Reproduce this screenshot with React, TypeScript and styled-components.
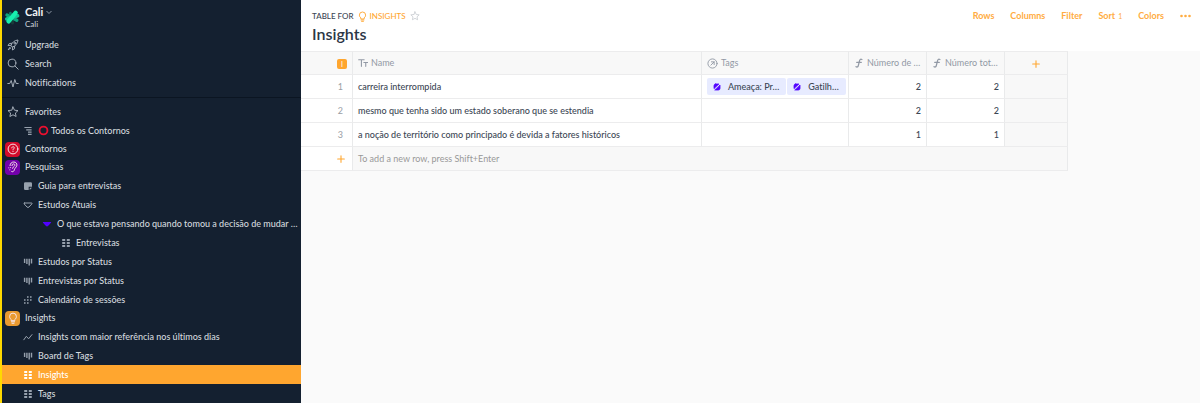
import React from "react";
import styled, { createGlobalStyle, css } from "styled-components";

const GlobalStyle = createGlobalStyle`
  *, *::before, *::after { box-sizing: border-box; }
  html, body { margin: 0; padding: 0; }
  body {
    font-family: Lato, "Noto Sans", sans-serif;
    font-size: 9px;
    line-height: 12px;
    font-variant-ligatures: none;
    color: #3b4654;
    background: #fafafa;
    overflow: hidden;
  }
  h1 { margin: 0; }
  a { color: inherit; text-decoration: none; }
  button { font: inherit; color: inherit; background: none; border: 0; padding: 0; cursor: pointer; }
`;

const Page = styled.div`
  display: flex;
  height: 100vh;
`;

/* Sidebar */

const Sidebar = styled.aside`
  flex: 0 0 301px;
  overflow: hidden;
  background: #142030;
  color: #d3d8de;
  border-left: 2px solid #ffd900;
`;

const SidebarTop = styled.div`
  padding: 3px 0 5px;
  border-bottom: 1px solid #0b1522;
`;

const Workspace = styled.button`
  display: flex;
  align-items: center;
  gap: 5px;
  height: 28px;
  margin: 0 0 4px 2px;
  text-align: left;
`;

const WorkspaceName = styled.span`
  display: flex;
  align-items: center;
  gap: 3px;
  font-size: 11px;
  line-height: 14px;
  font-weight: 700;
  color: #f1f3f5;
`;

const WorkspaceSub = styled.span`
  display: block;
  font-size: 8px;
  line-height: 10px;
`;

const NavList = styled.ul`
  list-style: none;
  margin: 0;
  padding: 0;
`;

const DocList = styled(NavList)`
  padding-top: 5px;
`;

const NavLink = styled.a<{ $depth: number; $active?: boolean; $root?: boolean }>`
  display: flex;
  align-items: center;
  height: ${(p) => (p.$root ? 18 : 19)}px;
  padding-left: ${(p) => (p.$depth === 0 ? 3 : 1 + p.$depth * 19)}px;
  gap: ${(p) => (p.$depth === 0 ? 5 : 4)}px;
  font-weight: 500;
  white-space: nowrap;
  ${(p) =>
    p.$active &&
    css`
      background: #ffa62f;
      color: #fff;
    `}
`;

const IconSlot = styled.span<{ $wide?: boolean }>`
  flex: none;
  display: flex;
  align-items: center;
  justify-content: center;
  width: ${(p) => (p.$wide ? 15 : 12)}px;
  color: #a3acb7;
`;

const Label = styled.span`
  display: flex;
  align-items: center;
  gap: 2px;
`;

const Badge = styled.span<{ $color: string }>`
  display: flex;
  align-items: center;
  justify-content: center;
  width: 15px;
  height: 15px;
  border-radius: 4px;
  background: ${(p) => p.$color};
  color: #f8e6e8;
`;

/* Main */

const Main = styled.main`
  flex: 1;
  min-width: 0;
  background: #fafafa;
`;

const Header = styled.header`
  display: flex;
  justify-content: space-between;
  height: 51px;
  padding: 10px 9px 0 11px;
  background: #fff;
`;

const Crumb = styled.div`
  display: flex;
  align-items: center;
  gap: 3px;
  height: 12px;
  font-size: 8px;
  font-weight: 500;
`;

const CrumbLink = styled.a`
  display: flex;
  align-items: center;
  gap: 2px;
  color: #ffa62f;
`;

const StarButton = styled.button`
  display: flex;
  margin-left: 1px;
  color: #c9ccd1;
`;

const Title = styled.h1`
  margin-top: 2px;
  font-size: 16px;
  line-height: 20px;
  font-weight: 600;
  color: #2b3646;
`;

const Toolbar = styled.div`
  display: flex;
  align-items: center;
  gap: 16px;
  height: 12px;
`;

const ToolButton = styled.button`
  display: flex;
  gap: 3px;
  line-height: 12px;
  font-weight: 700;
  color: #ffac41;
`;

const Count = styled.span`
  font-size: 7px;
  font-weight: 400;
`;

const Table = styled.table`
  width: 767px;
  table-layout: fixed;
  border-collapse: separate;
  border-spacing: 0;
`;

const Col = styled.col<{ $width?: number }>`
  width: ${(p) => (p.$width ? `${p.$width}px` : "auto")};
`;

const cell = css`
  height: 24px;
  padding: 0 5px;
  border-right: 1px solid #e9eaeb;
  border-bottom: 1px solid #ececed;
  overflow: hidden;
  white-space: nowrap;
`;

const Th = styled.th<{ $align?: string }>`
  ${cell}
  border-top: 1px solid #ececed;
  background: #f8f8f8;
  font-weight: 400;
  text-align: ${(p) => p.$align || "left"};
  color: #9299a5;
`;

const Td = styled.td<{ $align?: string; $muted?: boolean }>`
  ${cell}
  background: ${(p) => (p.$muted ? "#f8f8f8" : "#fff")};
  text-align: ${(p) => p.$align || "left"};
  font-weight: 500;
`;

const IndexTd = styled(Td)`
  padding-right: 9px;
  text-align: right;
  font-weight: 400;
  color: #9a9ea5;
`;

const AddRowTd = styled(IndexTd)`
  padding-right: 6px;
`;

const AddTd = styled(Td)`
  font-weight: 400;
  color: #999;
`;

const HeadLabel = styled.span`
  display: flex;
  align-items: center;
  gap: 3px;
`;

const TypeBadge = styled.span`
  display: inline-block;
  width: 10px;
  height: 10px;
  border-radius: 2px;
  background: #ffa62f;
  color: #fff;
  font-size: 7px;
  line-height: 10px;
  text-align: center;
  vertical-align: middle;
`;

const AddButton = styled.button`
  display: inline-flex;
  vertical-align: middle;
  color: #ffa62f;
`;

const Tags = styled.div`
  display: flex;
  gap: 1px;
`;

const Tag = styled.span`
  display: flex;
  align-items: center;
  gap: 7px;
  height: 17px;
  padding: 0 7px 0 6px;
  border-radius: 2px;
  background: #e7ebff;
  font-weight: 500;
`;

/* Icons */

const Svg = ({ size = 12, children }: { size?: number; children: React.ReactNode }) => (
  <svg width={size} height={size} viewBox="0 0 12 12" fill="none" stroke="currentColor" strokeWidth="1" strokeLinecap="round" strokeLinejoin="round" aria-hidden="true">
    {children}
  </svg>
);

const starPath = "M6 1 7.5 4.2 11 4.6 8.4 7 9.1 10.5 6 8.8 2.9 10.5 3.6 7 1 4.6 4.5 4.2Z";

const Rocket = () => (
  <Svg>
    <path d="M4 6.3C5 3.5 7.5 1.3 11 1 10.8 4.5 8.5 7 5.7 8Z" />
    <path d="M4.7 4.3 2.3 4.5 1 6.6 4 6.3M7.6 7.3 7.5 9.7 5.4 11 5.7 8M3 8.2 1.2 10.8 3.8 9" />
    <circle cx="7.9" cy="4.1" r="0.9" />
  </Svg>
);
const Search = () => (
  <Svg>
    <circle cx="5" cy="5" r="3.9" />
    <path d="M8 8 11.2 11.2" />
  </Svg>
);
const Pulse = () => (
  <Svg>
    <path d="M0.8 6.5H2.8L4.2 3.5 6 10 7.8 2.5 9.2 6.5H11.2" />
  </Svg>
);
const Star = ({ size = 12 }: { size?: number }) => (
  <Svg size={size}>
    <path d={starPath} />
  </Svg>
);
const Bulb = ({ size = 12 }: { size?: number }) => (
  <Svg size={size}>
    <path d="M4.2 8.3V7.5C3.2 6.8 2.6 5.8 2.6 4.5A3.4 3.4 0 0 1 9.4 4.5C9.4 5.8 8.8 6.8 7.8 7.5V8.3ZM4.4 9.8H7.6M5 11.3H7" />
  </Svg>
);
const Question = () => (
  <Svg>
    <circle cx="6" cy="6" r="4.9" />
    <path d="M4.8 4.9C4.8 3.2 7.3 3.3 7.2 4.9 7.1 5.8 6 5.8 6 6.9M6 8.5V8.6" />
  </Svg>
);
const Ear = () => (
  <Svg>
    <path d="M3 4.6C3.2 2.2 4.8 1 6.8 1 9 1 10.2 2.7 9.8 4.6 9.3 6.6 7.7 7 7.3 8.8 7 10.4 5.8 11.2 4.7 10.6" />
    <path d="M5 4.6C5.1 3.4 5.8 2.8 6.7 2.9 7.8 3 8.1 4 7.6 4.9 7 5.8 5.9 5.9 5.6 7.3M1.8 6.8V6.9M3.6 6.6V6.7M2.8 8.8V8.9" />
  </Svg>
);
const Timeline = () => (
  <Svg>
    <path d="M2.4 2.5H9.6M4.2 4.8H9.6M6 7.1H9.6M6 9.4H9.6" stroke="#97a1ad" strokeLinecap="butt" strokeWidth="1.2" />
  </Svg>
);
const Doc = () => (
  <Svg>
    <path d="M2 3.5Q2 2.2 3.3 2.2H8.7Q10 2.2 10 3.5V6.7H6.7V10H3.3Q2 10 2 8.7ZM7.7 7.7H10L7.7 10Z" fill="#97a1ad" stroke="none" />
  </Svg>
);
const TriangleOutline = () => (
  <Svg>
    <path d="M2.5 4H9.5Q10.6 4 9.8 5L7 8Q6 9 5 8L2.2 5Q1.4 4 2.5 4Z" stroke="#97a1ad" />
  </Svg>
);
const TriangleSolid = () => (
  <Svg>
    <path d="M2 4H10Q10.4 4.2 10 4.8L7 8Q6 8.9 5 8L2 4.8Q1.6 4.2 2 4Z" fill="#5200ff" stroke="none" />
  </Svg>
);
const Grid = ({ color = "#97a1ad" }: { color?: string }) => (
  <Svg>
    <path d="M2.2 3H5.2M6.8 3H9.8M2.2 6H5.2M6.8 6H9.8M2.2 9H5.2M6.8 9H9.8" stroke={color} strokeLinecap="butt" strokeWidth="1.9" />
  </Svg>
);
const Board = () => (
  <Svg>
    <path d="M2.6 2.7V7M4.9 2.7V8M7.2 2.7V9.4M9.5 2.7V7.6" stroke="#97a1ad" strokeLinecap="butt" strokeWidth="1.4" />
  </Svg>
);
const Calendar = () => (
  <Svg>
    <path d="M5 3H6.6M8 3H9.6M2 6H3.6M5 6H6.6M8 6H9.6M2 9H3.6M5 9H6.6" stroke="#97a1ad" strokeLinecap="butt" strokeWidth="1.6" />
  </Svg>
);
const Line = () => (
  <Svg>
    <path d="M1.8 8.8 4.3 5.3 6.6 7.8 10 3.6" stroke="#97a1ad" />
  </Svg>
);
const Plus = () => (
  <Svg size={10}>
    <path d="M6 2V10M2 6H10" strokeWidth="1.3" />
  </Svg>
);
const RedRing = () => (
  <Svg size={11}>
    <circle cx="6" cy="6" r="4.3" stroke="#e8102f" strokeWidth="2" />
  </Svg>
);
const TextType = () => (
  <Svg size={10}>
    <path d="M0.8 2H7.4M4.1 2V10M7 5.4H11.6M9.3 5.4V10" strokeWidth="1.3" />
  </Svg>
);
const Relation = () => (
  <Svg size={11}>
    <circle cx="6" cy="6" r="5" />
    <path d="M4.2 7.8 7.8 4.2M4.8 4.2H7.8V7.2" />
  </Svg>
);
const Formula = () => (
  <Svg size={10}>
    <path d="M9.5 1.8C7.8 1 7 1.8 6.6 3.4L5.2 9C4.8 10.8 3.6 11.2 2.4 10.4M3.3 5.3H8.7" strokeWidth="1.5" />
  </Svg>
);
const TagMark = () => (
  <Svg size={8}>
    <path d="M4 1.5H8.8L1.5 8.4V4Q1.5 1.5 4 1.5ZM10.5 3.6V8Q10.5 10.5 8 10.5H3.2Z" fill="#5200ff" stroke="#5200ff" strokeWidth="1.2" />
  </Svg>
);
const Logo = () => (
  <svg width="16" height="17" viewBox="0 0 16 17" strokeLinecap="round" aria-hidden="true">
    <path d="M8.5 12.5V14" stroke="#173c3a" strokeWidth="3" />
    <path d="M3 6 12.8 11.2" stroke="#0fa57f" strokeWidth="3.4" />
    <path d="M6.4 4.4 9 9" stroke="#0c7c66" strokeWidth="3" />
    <path d="M2.8 10 13.6 6.8" stroke="#13c695" strokeWidth="3.6" />
    <path d="M4.6 12.4 11.6 3.8" stroke="#17efae" strokeWidth="4.4" />
  </svg>
);
const Chevron = () => (
  <svg width="6" height="5" viewBox="0 0 6 5" fill="none" stroke="#8d98a5" aria-hidden="true">
    <path d="M0.5 1 3 3.5 5.5 1" />
  </svg>
);
const Dots = () => (
  <svg width="11" height="12" viewBox="0 0 11 12" fill="currentColor" aria-hidden="true">
    <circle cx="1.5" cy="6" r="1.3" />
    <circle cx="5.5" cy="6" r="1.3" />
    <circle cx="9.5" cy="6" r="1.3" />
  </svg>
);

type Item = { label: string; icon: React.ReactNode; depth: number; active?: boolean; mark?: React.ReactNode };

const mainNav: Item[] = [
  { label: "Upgrade", icon: <Rocket />, depth: 0 },
  { label: "Search", icon: <Search />, depth: 0 },
  { label: "Notifications", icon: <Pulse />, depth: 0 },
];

const docs: Item[] = [
  { label: "Favorites", icon: <Star />, depth: 0 },
  { label: "Todos os Contornos", icon: <Timeline />, depth: 1, mark: <RedRing /> },
  { label: "Contornos", icon: <Badge $color="#d40c2b"><Question /></Badge>, depth: 0 },
  { label: "Pesquisas", icon: <Badge $color="#7300ab"><Ear /></Badge>, depth: 0 },
  { label: "Guia para entrevistas", icon: <Doc />, depth: 1 },
  { label: "Estudos Atuais", icon: <TriangleOutline />, depth: 1 },
  { label: "O que estava pensando quando tomou a decisão de mudar …", icon: <TriangleSolid />, depth: 2 },
  { label: "Entrevistas", icon: <Grid />, depth: 3 },
  { label: "Estudos por Status", icon: <Board />, depth: 1 },
  { label: "Entrevistas por Status", icon: <Board />, depth: 1 },
  { label: "Calendário de sessões", icon: <Calendar />, depth: 1 },
  { label: "Insights", icon: <Badge $color="#ea9a30"><Bulb /></Badge>, depth: 0 },
  { label: "Insights com maior referência nos últimos dias", icon: <Line />, depth: 1 },
  { label: "Board de Tags", icon: <Board />, depth: 1 },
  { label: "Insights", icon: <Grid color="#fff" />, depth: 1, active: true },
  { label: "Tags", icon: <Grid />, depth: 1 },
];

const rows = [
  { name: "carreira interrompida", tags: ["Ameaça: Pr…", "Gatilh…"], a: 2, b: 2 },
  { name: "mesmo que tenha sido um estado soberano que se estendia", tags: [], a: 2, b: 2 },
  { name: "a noção de território como principado é devida a fatores históricos", tags: [], a: 1, b: 1 },
];

const NavItem = ({ item, root }: { item: Item; root?: boolean }) => (
  <li>
    <NavLink href="#" $depth={item.depth} $active={item.active} $root={root}>
      <IconSlot $wide={item.depth === 0}>{item.icon}</IconSlot>
      <Label>
        {item.mark}
        {item.label}
      </Label>
    </NavLink>
  </li>
);

export default function App() {
  return (
    <Page>
      <GlobalStyle />
      <Sidebar>
        <SidebarTop>
          <Workspace>
            <Logo />
            <span>
              <WorkspaceName>
                Cali <Chevron />
              </WorkspaceName>
              <WorkspaceSub>Cali</WorkspaceSub>
            </span>
          </Workspace>
          <NavList>
            {mainNav.map((item) => (
              <NavItem key={item.label} item={item} />
            ))}
          </NavList>
        </SidebarTop>
        <DocList>
          {docs.map((item, i) => (
            <NavItem key={i} item={item} root={item.depth === 0} />
          ))}
        </DocList>
      </Sidebar>
      <Main>
        <Header>
          <div>
            <Crumb>
              TABLE FOR
              <CrumbLink href="#">
                <Bulb size={11} />
                INSIGHTS
              </CrumbLink>
              <StarButton aria-label="Add to favorites">
                <Star size={10} />
              </StarButton>
            </Crumb>
            <Title>Insights</Title>
          </div>
          <Toolbar>
            <ToolButton>Rows</ToolButton>
            <ToolButton>Columns</ToolButton>
            <ToolButton>Filter</ToolButton>
            <ToolButton>
              Sort <Count>1</Count>
            </ToolButton>
            <ToolButton>Colors</ToolButton>
            <ToolButton aria-label="More">
              <Dots />
            </ToolButton>
          </Toolbar>
        </Header>
        <Table>
          <colgroup>
            <Col $width={52} />
            <Col />
            <Col $width={147} />
            <Col $width={78} />
            <Col $width={78} />
            <Col $width={63} />
          </colgroup>
          <thead>
            <tr>
              <Th $align="right"><TypeBadge>I</TypeBadge></Th>
              <Th><HeadLabel><TextType />Name</HeadLabel></Th>
              <Th><HeadLabel><Relation />Tags</HeadLabel></Th>
              <Th><HeadLabel><Formula />Número de …</HeadLabel></Th>
              <Th><HeadLabel><Formula />Número tot…</HeadLabel></Th>
              <Th $align="center"><AddButton aria-label="Add column"><Plus /></AddButton></Th>
            </tr>
          </thead>
          <tbody>
            {rows.map((row, i) => (
              <tr key={row.name}>
                <IndexTd>{i + 1}</IndexTd>
                <Td>{row.name}</Td>
                <Td>
                  <Tags>
                    {row.tags.map((tag) => (
                      <Tag key={tag}><TagMark />{tag}</Tag>
                    ))}
                  </Tags>
                </Td>
                <Td $align="right">{row.a}</Td>
                <Td $align="right">{row.b}</Td>
                <Td $muted />
              </tr>
            ))}
            <tr>
              <AddRowTd><AddButton aria-label="Add row"><Plus /></AddButton></AddRowTd>
              <AddTd $muted colSpan={5}>To add a new row, press Shift+Enter</AddTd>
            </tr>
          </tbody>
        </Table>
      </Main>
    </Page>
  );
}
